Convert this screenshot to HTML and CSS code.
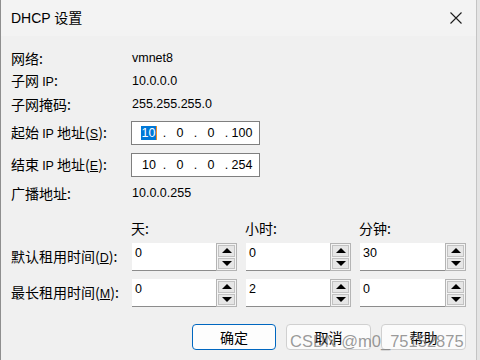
FILE: index.html
```html
<!DOCTYPE html>
<html lang="zh-CN">
<head>
  <meta charset="utf-8" />
  <title>DHCP 设置</title>
  <link rel="stylesheet" href="styles.css">
</head>

<body>
  <div class="dialog">
    <div class="titlebar">
      <span class="title">DHCP 设置</span>
      <svg class="close" width="12" height="12" viewBox="0 0 12 12">
        <path d="M0.5 0.5 L11.5 11.5 M11.5 0.5 L0.5 11.5" stroke="#1b1b1b" stroke-width="1.1" fill="none" />
      </svg>
    </div>

    <div class="content">
      <div class="info">
        <span class="label">网络:</span><span class="value">vmnet8</span>
        <span class="label">子网 <span class="lat">IP</span>:</span><span class="value">10.0.0.0</span>
        <span class="label">子网掩码:</span><span class="value">255.255.255.0</span>
      </div>

      <div class="ip-rows">
        <span class="label">起始 <span class="lat">IP</span> 地址(<u class="lat">S</u>):</span>
        <div class="ip-box">
          <span class="oct"><span class="sel">10</span></span><span class="dot">.</span>
          <span class="oct">0</span><span class="dot">.</span>
          <span class="oct">0</span><span class="dot">.</span>
          <span class="oct">100</span>
        </div>
        <span class="label">结束 <span class="lat">IP</span> 地址(<u class="lat">E</u>):</span>
        <div class="ip-box">
          <span class="oct">10</span><span class="dot">.</span>
          <span class="oct">0</span><span class="dot">.</span>
          <span class="oct">0</span><span class="dot">.</span>
          <span class="oct">254</span>
        </div>
      </div>

      <div class="info broadcast">
        <span class="label">广播地址:</span><span class="value">10.0.0.255</span>
      </div>

      <div class="lease">
        <span></span>
        <span class="head">天:</span>
        <span class="head">小时:</span>
        <span class="head">分钟:</span>

        <span class="label">默认租用时间(<u class="lat">D</u>):</span>
        <div class="spin"><span class="field">0</span><div class="arrows"><div class="btn"><i class="up"></i></div><div class="btn"><i class="down"></i></div></div></div>
        <div class="spin"><span class="field">0</span><div class="arrows"><div class="btn"><i class="up"></i></div><div class="btn"><i class="down"></i></div></div></div>
        <div class="spin"><span class="field">30</span><div class="arrows"><div class="btn"><i class="up"></i></div><div class="btn"><i class="down"></i></div></div></div>

        <span class="label">最长租用时间(<u class="lat">M</u>):</span>
        <div class="spin"><span class="field">0</span><div class="arrows"><div class="btn"><i class="up"></i></div><div class="btn"><i class="down"></i></div></div></div>
        <div class="spin"><span class="field">2</span><div class="arrows"><div class="btn"><i class="up"></i></div><div class="btn"><i class="down"></i></div></div></div>
        <div class="spin"><span class="field">0</span><div class="arrows"><div class="btn"><i class="up"></i></div><div class="btn"><i class="down"></i></div></div></div>
      </div>

      <div class="buttons">
        <button class="primary">确定</button>
        <button>取消</button>
        <button>帮助</button>
      </div>
    </div>

    <div class="watermark">CSDN @m0_75152875</div>
  </div>
  <div class="behind"></div>
</body>
</html>
```

FILE: styles.css
```css
html, body {
  margin: 0;
  padding: 0;
  width: 480px;
  height: 360px;
  overflow: hidden;
}

body {
  display: flex;
  background: #dedede;
  font-family: 'Noto Sans CJK SC', sans-serif;
  color: #000;
}

.dialog {
  position: relative;
  width: 476px;
  height: 360px;
  box-sizing: border-box;
  background: #f0f0f0;
  border-left: 1px solid #8e8e8e;
}

.behind {
  flex: 1;
  border-left: 1px solid #c4c4c4;
  background: #e4e4e4;
}

.titlebar {
  height: 36px;
  display: flex;
  align-items: center;
  justify-content: space-between;
  padding: 0 14px 0 10px;
  background: #f3f3f3;
}

.title {
  font-family: 'Liberation Sans', 'Noto Sans CJK SC', sans-serif;
  font-size: 14px;
  line-height: 16px;
}

.close { display: block; }

.content {
  padding: 10px 10px 0 10px;
}

.label {
  font-size: 14px;
  line-height: 18px;
  white-space: nowrap;
}

.lat {
  font-family: 'Liberation Sans', sans-serif;
  font-size: 12.5px;
}

.value {
  font-family: 'Liberation Sans', sans-serif;
  font-size: 12.5px;
  line-height: 16px;
  padding-left: 1px;
}

.info {
  display: grid;
  grid-template-columns: 120px 1fr;
  grid-auto-rows: 23px;
  align-items: center;
}

.ip-rows {
  display: grid;
  grid-template-columns: 120px 129px;
  grid-auto-rows: 24px;
  row-gap: 8px;
  align-items: center;
  margin-top: 6px;
}

.ip-box {
  height: 24px;
  box-sizing: border-box;
  border: 1px solid #7f7f7f;
  background: #fff;
  display: flex;
  align-items: center;
  padding-left: 5px;
  font-family: 'Liberation Sans', sans-serif;
  font-size: 12.5px;
  line-height: 14px;
}

.oct {
  width: 24px;
  text-align: center;
}

.dot { width: 7px; text-align: center; }

.sel {
  background: #0078d7;
  color: #fff;
  padding: 0 1px;
  border-right: 1px solid #f08a24;
}

.broadcast { margin-top: 4px; }

.lease {
  display: grid;
  grid-template-columns: 112px 105px 105px 106px;
  grid-template-rows: 22px 28px 28px;
  column-gap: 9px;
  row-gap: 8px;
  align-items: center;
  margin-top: 9px;
}

.head {
  font-size: 14px;
  line-height: 18px;
  margin-left: -1px;
  align-self: end;
  margin-bottom: -2px;
}

.spin {
  display: flex;
  height: 28px;
}

.field {
  flex: 1;
  background: #fff;
  border-bottom: 1px solid #8c8c8c;
  font-family: 'Liberation Sans', sans-serif;
  font-size: 12.5px;
  line-height: 14px;
  padding: 3px 0 0 3px;
}

.arrows {
  width: 21px;
  box-sizing: border-box;
  border: 1px solid #b4b4b4;
  background: #f4f4f4;
  display: flex;
  flex-direction: column;
  padding: 1px;
  gap: 1px;
}

.btn {
  flex: 1;
  border: 1px solid #c2c2c2;
  background: #e6e6e6;
  display: flex;
  align-items: center;
  justify-content: center;
}

.up, .down {
  width: 0;
  height: 0;
  border-left: 5px solid transparent;
  border-right: 5px solid transparent;
}

.up { border-bottom: 5px solid #000; }
.down { border-top: 5px solid #000; }

.buttons {
  display: flex;
  justify-content: flex-end;
  gap: 10px;
  margin-top: 17px;
}

button {
  width: 85px;
  height: 26px;
  box-sizing: border-box;
  border: 1px solid #d0d0d0;
  border-radius: 4px;
  background: #fbfbfb;
  font-family: 'Noto Sans CJK SC', sans-serif;
  font-size: 14px;
  line-height: 16px;
  padding: 0;
  color: #000;
}

button.primary {
  width: 84px;
  border-color: #0067c0;
  background: #fdfdfd;
}

.watermark {
  position: absolute;
  left: 289px;
  top: 331px;
  font-family: 'Liberation Sans', sans-serif;
  font-size: 16.5px;
  line-height: 20px;
  color: rgba(110, 110, 110, 0.7);
  white-space: nowrap;
}
```
